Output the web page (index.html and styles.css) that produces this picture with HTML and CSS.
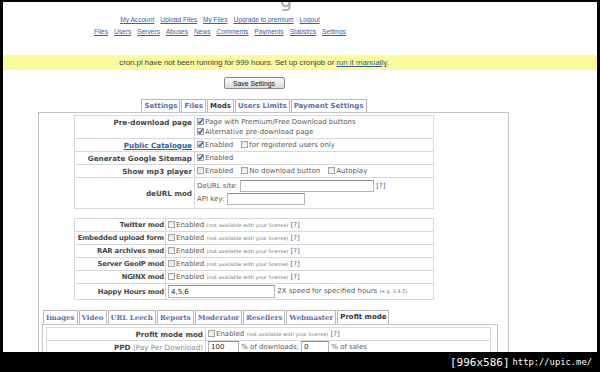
FILE: index.html
```html
<!DOCTYPE html>
<html>
<head>
<meta charset="utf-8">
<title>Settings</title>
<link rel="stylesheet" href="styles.css">
</head>
<body>
<div class="frame">
  <div class="page">
    <div class="logo"><span class="logo-g">g</span></div>
    <nav class="nav">
      <div class="nav-row"><a href="#">My Account</a><a href="#">Upload Files</a><a href="#">My Files</a><a href="#">Upgrade to premium</a><a href="#">Logout</a></div>
      <div class="nav-row"><a href="#">Files</a><a href="#">Users</a><a href="#">Servers</a><a href="#">Abuses</a><a href="#">News</a><a href="#">Comments</a><a href="#">Payments</a><a href="#">Statistics</a><a href="#">Settings</a></div>
    </nav>
    <div class="notice"><div class="col">cron.pl have not been running for 999 hours. Set up cronjob or <a href="#">run it manually</a>.</div></div>
    <div class="col save-row"><button class="btn">Save Settings</button></div>
    <div class="col tabs"><span class="tab">Settings</span><span class="tab">Files</span><span class="tab on">Mods</span><span class="tab">Users Limits</span><span class="tab">Payment Settings</span></div>
    <div class="panel">
      <table class="grid g1">
        <colgroup><col class="c1"><col></colgroup>
        <tr class="r-pre">
          <td class="lbl top">Pre-download page</td>
          <td>
            <div class="ln"><span class="cb on"><svg viewBox="0 0 7 7"><path d="M1.3 3.6 L2.9 5.3 L5.8 1.2" fill="none" stroke="#2b4d8c" stroke-width="1.3"/></svg></span>Page with Premium/Free Download buttons</div>
            <div class="ln"><span class="cb on"><svg viewBox="0 0 7 7"><path d="M1.3 3.6 L2.9 5.3 L5.8 1.2" fill="none" stroke="#2b4d8c" stroke-width="1.3"/></svg></span>Alternative pre-download page</div>
          </td>
        </tr>
        <tr class="r13">
          <td class="lbl"><a href="#">Public Catalogue</a></td>
          <td><span class="cb on"><svg viewBox="0 0 7 7"><path d="M1.3 3.6 L2.9 5.3 L5.8 1.2" fill="none" stroke="#2b4d8c" stroke-width="1.3"/></svg></span>Enabled<span class="cb sp"></span>for registered users only</td>
        </tr>
        <tr class="r13">
          <td class="lbl">Generate Google Sitemap</td>
          <td><span class="cb on"><svg viewBox="0 0 7 7"><path d="M1.3 3.6 L2.9 5.3 L5.8 1.2" fill="none" stroke="#2b4d8c" stroke-width="1.3"/></svg></span>Enabled</td>
        </tr>
        <tr class="r13">
          <td class="lbl">Show mp3 player</td>
          <td><span class="cb"></span>Enabled<span class="cb sp"></span>No download button<span class="cb sp"></span>Autoplay</td>
        </tr>
        <tr class="r-deurl">
          <td class="lbl">deURL mod</td>
          <td>
            <div class="ln2">DeURL site: <input class="inp w-site" type="text" value=""> <span class="q">[?]</span></div>
            <div class="ln2">API key: <input class="inp w-api" type="text" value=""></div>
          </td>
        </tr>
      </table>

      <table class="grid g2">
        <colgroup><col class="c1"><col></colgroup>
        <tr class="r13"><td class="lbl">Twitter mod</td><td><span class="cb"></span>Enabled <span class="sm">(not available with your license)</span> <span class="q">[?]</span></td></tr>
        <tr class="r13"><td class="lbl">Embedded upload form</td><td><span class="cb"></span>Enabled <span class="sm">(not available with your license)</span> <span class="q">[?]</span></td></tr>
        <tr class="r13"><td class="lbl">RAR archives mod</td><td><span class="cb"></span>Enabled <span class="sm">(not available with your license)</span> <span class="q">[?]</span></td></tr>
        <tr class="r13"><td class="lbl">Server GeoIP mod</td><td><span class="cb"></span>Enabled <span class="sm">(not available with your license)</span> <span class="q">[?]</span></td></tr>
        <tr class="r13"><td class="lbl">NGINX mod</td><td><span class="cb"></span>Enabled <span class="sm">(not available with your license)</span> <span class="q">[?]</span></td></tr>
        <tr class="r16"><td class="lbl">Happy Hours mod</td><td><input class="inp w-hh" type="text" value="4,5,6"> 2X speed for specified hours <span class="sm">(e.g. 3,4,5)</span></td></tr>
      </table>

      <div class="tabs2"><span class="tab2">Images</span><span class="tab2">Video</span><span class="tab2">URL Leech</span><span class="tab2">Reports</span><span class="tab2">Moderator</span><span class="tab2">Resellers</span><span class="tab2">Webmaster</span><span class="tab2 on">Profit mode</span></div>
      <div class="panel2">
        <table class="grid g3">
          <colgroup><col class="c1"><col></colgroup>
          <tr class="r13"><td class="lbl">Profit mode mod</td><td><span class="cb"></span>Enabled <span class="sm">(not available with your license)</span> <span class="q">[?]</span></td></tr>
          <tr class="r13"><td class="lbl">PPD <span class="lt">(Pay Per Download)</span></td><td><input class="inp w-ppd" type="text" value="100"> % of downloads, <input class="inp w-ppd2" type="text" value="0"> % of sales</td></tr>
        </table>
      </div>
    </div>
  </div>
  <div class="bar"><span class="dim">[996x586]</span><span class="url">http://upic.me/</span></div>
</div>
</body>
</html>
```

FILE: styles.css
```css
body {
  margin: 0;
  background: #000;
}

.frame {
  width: 600px;
  height: 372px;
  background: #000;
  padding: 2px 3px 0 3px;
  box-sizing: border-box;
  display: flex;
  flex-direction: column;
}

.page {
  background: #fff;
  height: 350px;
  overflow: hidden;
  font-family: "DejaVu Sans", Verdana, sans-serif;
  font-size: 7px;
  color: #5a5a5a;
  flex: none;
}

a {
  color: #2f5fa6;
  text-decoration: underline;
}

.logo {
  height: 12px;
  overflow: hidden;
  padding-left: 277px;
}

.logo-g {
  display: block;
  font: 19px/19px "DejaVu Sans", sans-serif;
  color: #a4a4a4;
  margin-top: -11px;
}

.nav {
  width: 434px;
  font-family: "Liberation Sans", Arial, sans-serif;
  font-size: 6.6px;
  line-height: 12px;
}

.nav-row {
  display: flex;
  justify-content: center;
  gap: 6px;
}

.nav a {
  color: #3562a8;
}

.notice {
  margin-top: 17px;
  background: #fcfa9d;
  height: 15px;
  line-height: 15px;
  font-family: "Liberation Sans", Arial, sans-serif;
  font-size: 7.8px;
  color: #3c3c3c;
}

.notice a {
  color: #2b6288;
}

.col {
  width: 502px;
  text-align: center;
}

.save-row {
  margin-top: 7px;
  height: 12px;
  line-height: 12px;
}

.btn {
  display: inline-block;
  vertical-align: top;
  height: 12px;
  width: 61px;
  padding: 0;
  font: 6.8px "Liberation Sans", Arial, sans-serif;
  color: #111;
  border: 1px solid #8a8a8a;
  border-radius: 2px;
  background: linear-gradient(#fbfbfb, #dadada);
}

.tabs {
  margin-top: 10px;
  display: flex;
  justify-content: center;
  gap: 1px;
  height: 13px;
}

.tab {
  border: 1px solid #b8b8b8;
  border-bottom: 0;
  padding: 0 2px;
  font: bold 7px/12px "DejaVu Sans", Verdana, sans-serif;
  color: #5b70a8;
  background: #fff;
}

.tab.on {
  color: #333;
}

.panel {
  margin-left: 35px;
  width: 471px;
  height: 300px;
  border: 1px solid #c4c4c4;
  border-bottom: 0;
  box-sizing: border-box;
  padding-top: 2px;
}

table.grid {
  border-collapse: collapse;
  table-layout: fixed;
  margin-left: 35px;
  width: 360px;
  font-size: 7px;
}

.grid td {
  border: 1px solid #d8d8d8;
  padding: 0 2px;
  white-space: nowrap;
  vertical-align: middle;
  overflow: hidden;
}

.grid td.lbl {
  text-align: right;
  font-weight: bold;
  color: #474747;
  font-size: 7.2px;
}

.grid td.top {
  vertical-align: top;
  line-height: 14px;
}

.g1 col.c1 { width: 120px; }
.g2 col.c1 { width: 91px; }
.g3 col.c1 { width: 159px; }

.g2 {
  margin-top: 9px;
}

.g2 td.lbl {
  font-size: 6.8px;
  letter-spacing: -0.15px;
  padding: 0 1px;
}

.r-pre td { height: 22px; }
.r13 td { height: 12px; }
.r16 td { height: 15px; }
.r-deurl td { height: 30px; }

.ln {
  height: 10px;
  line-height: 10px;
}

.ln2 {
  height: 13px;
  line-height: 13px;
}

.cb {
  display: inline-block;
  width: 7px;
  height: 7px;
  box-sizing: border-box;
  border: 1px solid #a4a4a4;
  background: linear-gradient(#e4e4e4, #fafafa);
  vertical-align: -1px;
  margin-right: 1px;
  position: relative;
}

.cb svg {
  position: absolute;
  left: -1px;
  top: -1px;
  width: 7px;
  height: 7px;
}

.cb.sp {
  margin-left: 8px;
}

.sm {
  font-size: 5.1px;
  color: #777;
}

.q {
  color: #3a5ea0;
}

.lt {
  font-weight: normal;
  color: #8a8a8a;
}

.inp {
  height: 12px;
  box-sizing: border-box;
  border: 1px solid #b4b4b4;
  border-top-color: #8c8c8c;
  padding: 0 2px;
  font: 7px "DejaVu Sans", Verdana, sans-serif;
  color: #222;
  vertical-align: middle;
  margin: 0;
}

.w-site { width: 134px; }
.w-api { width: 78px; }
.w-hh { width: 107px; height: 13px; }
.w-ppd { width: 31px; }
.w-ppd2 { width: 28px; }

.tabs2 {
  margin-top: 10px;
  padding-left: 4px;
  display: flex;
  gap: 1px;
  height: 14px;
}

.tab2 {
  border: 1px solid #b8b8b8;
  border-bottom: 0;
  padding: 0 2px;
  font: bold 7px/13px "DejaVu Serif", Georgia, serif;
  color: #5b70a8;
  background: #fff;
}

.tab2.on {
  font-family: "DejaVu Sans", Verdana, sans-serif;
  color: #333;
}

.panel2 {
  margin-left: 3px;
  width: 456px;
  height: 60px;
  border: 1px solid #c4c4c4;
  box-sizing: border-box;
  padding-top: 2px;
}

.g3 {
  margin-left: 3px !important;
  width: 445px !important;
}

.bar {
  height: 20px;
  display: flex;
  justify-content: flex-end;
  align-items: center;
  gap: 3px;
  padding-right: 5px;
  color: #fff;
  flex: none;
}

.dim {
  font: 11px "DejaVu Sans Mono", monospace;
}

.url {
  font: 8.8px "DejaVu Sans Mono", monospace;
}
```
